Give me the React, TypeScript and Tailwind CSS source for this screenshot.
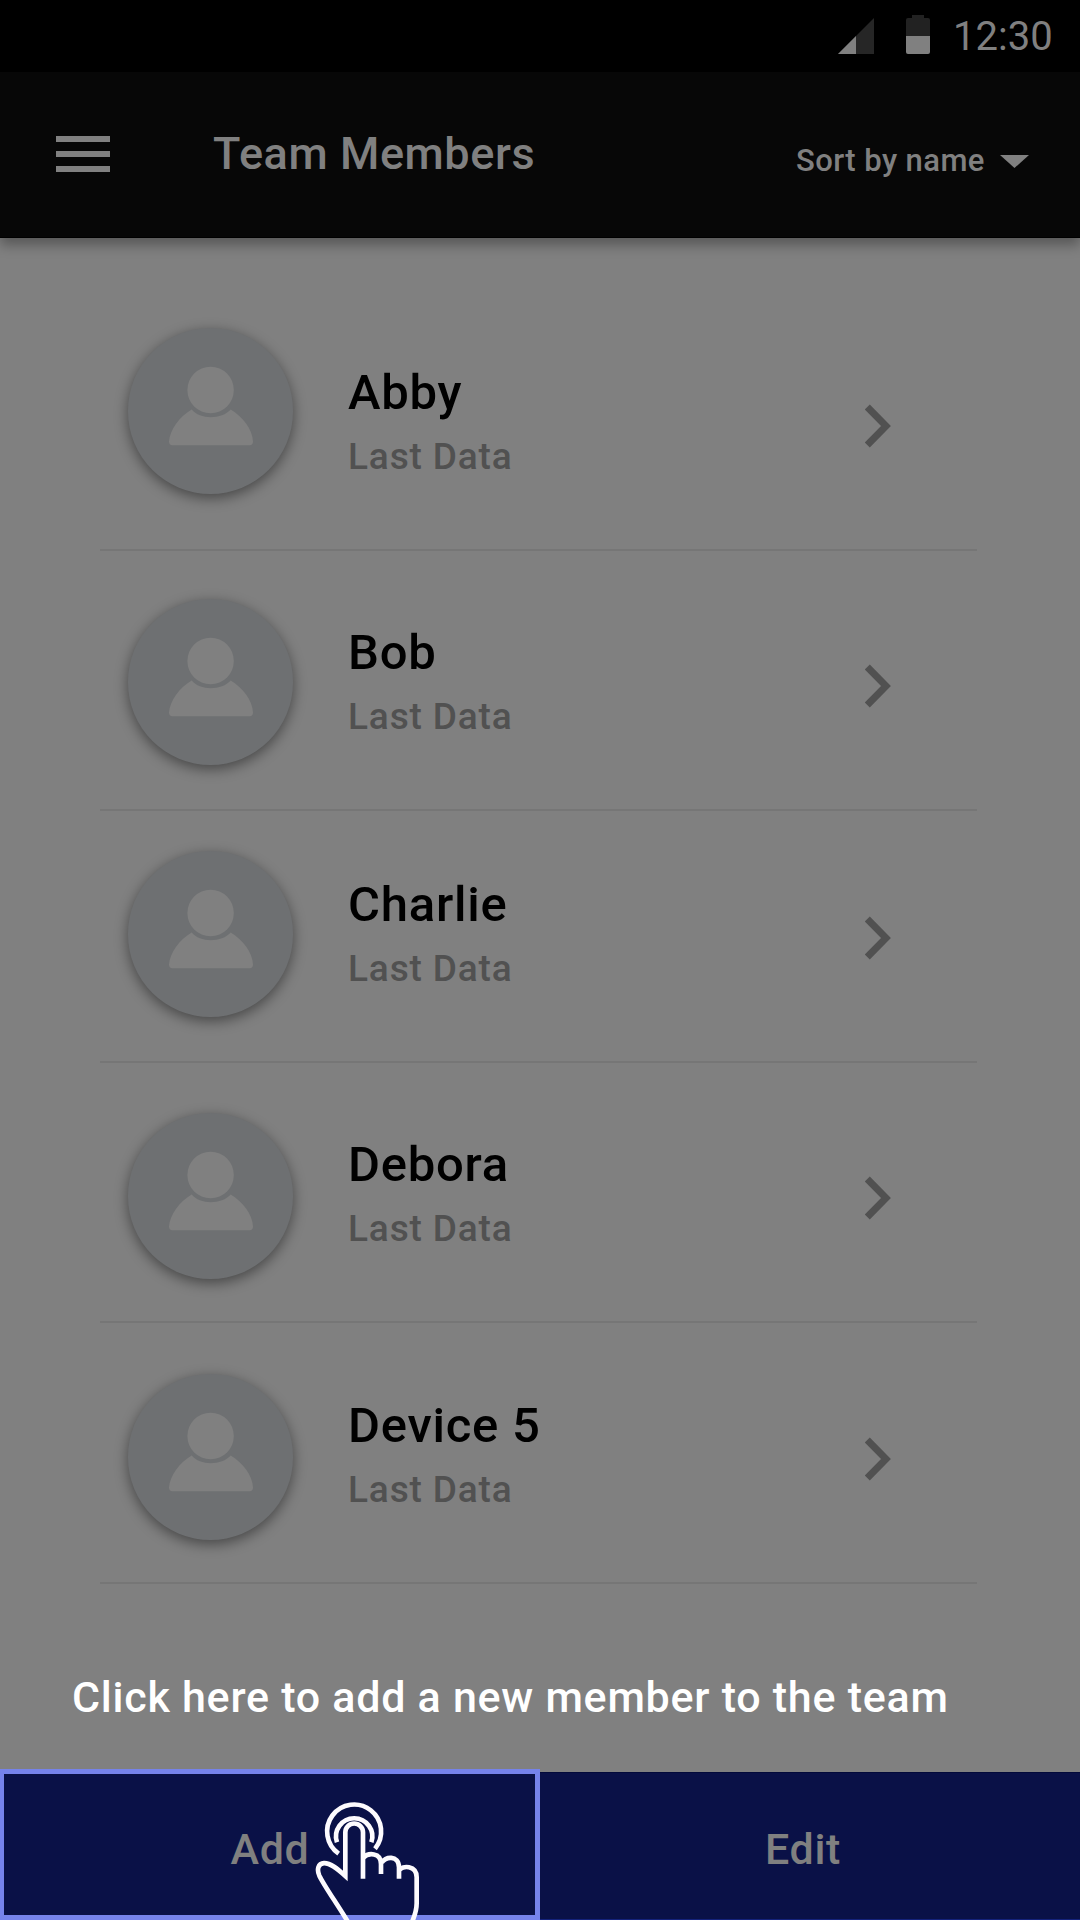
type Member = { name: string; row: string; avatar: string };

const members: Member[] = [
  { name: 'Abby', row: 'h-[313px]', avatar: 'mb-[55px]' },
  { name: 'Bob', row: 'h-[260px]', avatar: 'mb-[44px]' },
  { name: 'Charlie', row: 'h-[252px]', avatar: 'mb-[44px]' },
  { name: 'Debora', row: 'h-[260px]', avatar: 'mb-[42px]' },
  { name: 'Device 5', row: 'h-[261px]', avatar: 'mb-[42px]' },
];

function StatusBar() {
  return (
    <div className="flex h-[72px] items-center bg-black pl-[838px] text-[#808080]">
      <svg className="h-9 w-9" viewBox="0 0 36 36">
        <path d="M0 36L36 0V36Z" fill="#262626" />
        <path d="M0 36L18 18V36Z" fill="#808080" />
      </svg>
      <svg className="ml-8 mb-[3px] h-[39px] w-6" viewBox="0 0 24 39">
        <path d="M6 0H18V3H22A2 2 0 0 1 24 5V21H0V5A2 2 0 0 1 2 3H6Z" fill="#222222" />
        <path d="M0 21H24V37A2 2 0 0 1 22 39H2A2 2 0 0 1 0 37Z" fill="#808080" />
      </svg>
      <span className="mt-0.5 ml-[23px] text-[40px] leading-[48px]">12:30</span>
    </div>
  );
}

function Header() {
  return (
    <header className="relative z-10 flex h-[166px] items-start border-b border-black bg-[#070707] pl-14 text-[#808080] shadow-[0_7px_12px_rgba(0,0,0,0.32)]">
      <button className="mt-16 flex w-[54px] flex-col gap-[9px]" aria-label="Menu">
        <span className="h-1.5 bg-[#808080]" />
        <span className="h-1.5 bg-[#808080]" />
        <span className="h-1.5 bg-[#808080]" />
      </button>
      <h1 className="mt-14 ml-[103px] w-[583px] text-[45px] leading-[52px] font-medium tracking-[0.58px]">Team Members</h1>
      <button className="mt-[71px] flex items-center whitespace-nowrap text-[31px] leading-9 font-medium tracking-[0.42px]">
        Sort by name
        <svg className="mt-px ml-[15px] h-[13px] w-[29px]" viewBox="0 0 29 13">
          <path d="M0 0H29L14.500 13Z" fill="#808080" />
        </svg>
      </button>
    </header>
  );
}

function Avatar({ className }: { className: string }) {
  return (
    <div className={`flex h-[166px] w-[165px] shrink-0 items-end rounded-full bg-[#6e7072] shadow-[0_4px_14px_rgba(0,0,0,0.45)] ${className}`}>
      <svg className="h-[165px] w-[165px]" viewBox="0 0 165 165" fill="#808080">
        <circle cx="82.6" cy="61" r="23.2" />
        <path d="M63.7 80.500C71.5 90.700 94 90.700 102.7 80.500C115 88 124.5 100.500 125 112.500Q125 116.200 121.500 116.200H44.500Q41 116.200 41 112.500C42 100.500 51.500 87.500 63.700 80.500Z" />
      </svg>
    </div>
  );
}

function MemberRow({ name, row, avatar }: Member) {
  return (
    <li className={`mr-[103px] ml-[100px] flex items-end border-b-2 border-[#767676] pl-7 ${row}`}>
      <Avatar className={avatar} />
      <div className="mb-[70px] ml-[55px] flex w-[517px] flex-col gap-3.5">
        <span className="text-[49px] leading-[56px] font-medium tracking-[0.75px] text-black">{name}</span>
        <span className="text-[37px] leading-[44px] font-medium tracking-[0.85px] text-[#515151]">Last Data</span>
      </div>
      <svg className="mb-[101px] h-[44px] w-[26px]" viewBox="0 0 26 44" fill="none" stroke="#515151" strokeWidth="7">
        <path d="M2.300 3L21 22L2.300 41" />
      </svg>
    </li>
  );
}

function TapHand() {
  return (
    <svg
      className="absolute top-[31px] left-[313px] h-[120px] w-[110px]"
      viewBox="339 30 330 360"
      fill="none"
      stroke="#fdfbfe"
      strokeWidth="14"
    >
      <path d="M416 191A81 81 0 1 1 525 176" />
      <path d="M411 157A54.500 54.500 0 1 1 514 157" />
      <path d="M489 266V127A26.500 26.500 0 0 0 436 127V258C412 236 392 219 372 219.500C354 220 350 239 358 257C372 286 408 337 444 396" />
      <path d="M490 203C504 188 543 186 543 222V252" />
      <path d="M545 219C553 199 597 194 597 232V266" />
      <path d="M598 240C606 226 650 225 650 262V340C650 362 644 378 636 396" />
    </svg>
  );
}

export default function App() {
  return (
    <div className="flex h-[1920px] w-[1080px] flex-col overflow-hidden bg-[#808080] font-['Roboto',sans-serif]">
      <StatusBar />
      <Header />
      <ul>
        {members.map((m) => (
          <MemberRow key={m.name} {...m} />
        ))}
      </ul>
      <p className="mt-[88px] pl-[72px] text-[43px] leading-[50px] font-medium tracking-[0.74px] whitespace-nowrap text-white">
        Click here to add a new member to the team
      </p>
      <div className="relative mt-[47px] flex h-[151px] items-end text-[43px] leading-[50px] font-medium tracking-[0.7px] text-[#808080]">
        <button className="h-[151px] w-[540px] border-x-4 border-y-5 border-r-5 border-[#7683eb] bg-[#0a1147] pt-2 pl-px">
          Add
        </button>
        <button className="h-[148px] w-[540px] border-t border-b border-t-[#030a3a] border-b-[#14227a] bg-[#0a1147] pt-[5px] pr-3.5">
          Edit
        </button>
        <TapHand />
      </div>
    </div>
  );
}
